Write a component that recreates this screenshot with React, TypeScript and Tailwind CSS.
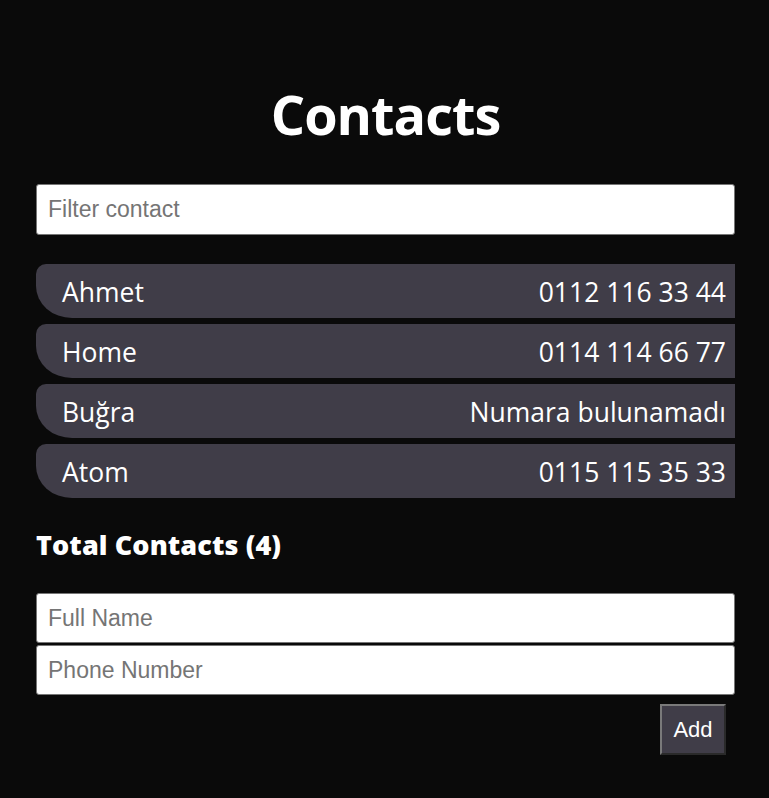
export default function App() {
  const contacts = [
    { name: "Ahmet", phone: "0112 116 33 44" },
    { name: "Home", phone: "0114 114 66 77" },
    { name: "Buğra", phone: "Numara bulunamadı" },
    { name: "Atom", phone: "0115 115 35 33" },
  ];
  const sans = { fontFamily: '"Open Sans", "Noto Sans", sans-serif' };
  const inputCls =
    "block w-full rounded-[3px] border border-[#767676] bg-white px-[11px] text-[23px] text-black placeholder:text-[#757575] font-['Liberation_Sans',sans-serif]";
  return (
    <div className="min-h-[798px] w-full bg-[#0a0a0a] text-white" style={sans}>
      <div className="pl-[36px] pr-[34px] pt-[72px]">
        <h1 className="text-center text-[54px] font-bold leading-[84px] tracking-[-1px]">Contacts</h1>
        <input placeholder="Filter contact" className={"mt-[28px] h-[51px] " + inputCls} />
        <ul className="mt-[29px] flex flex-col gap-[6px]">
          {contacts.map((c) => (
            <li
              key={c.name}
              className="flex h-[54px] items-center justify-between rounded-tl-[10px] rounded-bl-[36px_32px] bg-[#403d48] pl-[26px] pr-[9px] text-[26.5px]"
            >
              <span className="translate-y-[2px]">{c.name}</span>
              <span className="translate-y-[2px]">{c.phone}</span>
            </li>
          ))}
        </ul>
        <h2 className="mt-[30px] text-[27px] font-extrabold leading-[34px] tracking-[0.1px]">Total Contacts (4)</h2>
        <div className="mt-[31px] flex flex-col gap-[2px]">
          <input placeholder="Full Name" className={"h-[50px] " + inputCls} />
          <input placeholder="Phone Number" className={"h-[50px] " + inputCls} />
        </div>
        <div className="mt-[9px] flex justify-end pr-[9px]">
          <button className="h-[51px] w-[66px] border-2 border-t-[#7a7a7a] border-l-[#7a7a7a] border-b-[#2a2a2a] border-r-[#2a2a2a] bg-[#403d48] text-[22px] text-white font-['Liberation_Sans',sans-serif]">
            Add
          </button>
        </div>
      </div>
    </div>
  );
}
